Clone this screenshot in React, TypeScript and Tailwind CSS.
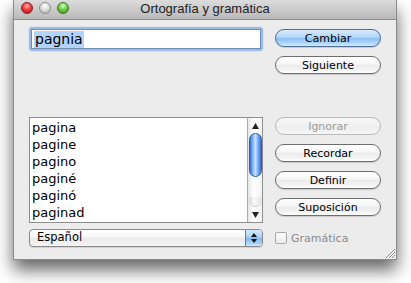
import React from "react";

function Btn({ label, kind }: { label: string; kind: "blue" | "normal" | "disabled" }) {
  const base =
    "h-[18px] rounded-full border flex items-center justify-center text-[11px] leading-none font-['DejaVu_Sans',sans-serif]";
  if (kind === "blue")
    return (
      <div
        className={`${base} border-[#4f6f9c] text-black bg-[linear-gradient(to_bottom,#d8eafc_0%,#b3d6f8_45%,#8ec1f1_52%,#a9d3fa_80%,#d6eeff_100%)] shadow-[0_1px_1px_rgba(0,0,0,0.15)]`}
      >
        {label}
      </div>
    );
  if (kind === "disabled")
    return (
      <div
        className={`${base} border-[#b9b9b9] text-[#9a9a9a] bg-[linear-gradient(to_bottom,#f7f7f7_0%,#f1f1f1_50%,#ececec_51%,#f6f6f6_100%)]`}
      >
        {label}
      </div>
    );
  return (
    <div
      className={`${base} border-[#6e6e6e] text-black bg-[linear-gradient(to_bottom,#ffffff_0%,#f6f6f6_45%,#ebebeb_52%,#f3f3f3_80%,#ffffff_100%)] shadow-[0_1px_1px_rgba(0,0,0,0.15)]`}
    >
      {label}
    </div>
  );
}

export default function App() {
  const words = ["pagina", "pagine", "pagino", "paginé", "paginó", "paginad"];
  return (
    <div className="w-[411px] h-[283px] bg-white overflow-hidden font-['DejaVu_Sans',sans-serif]">
      <div className="ml-[13px] w-[384px] h-[260px] bg-[#ececec] border-x border-b border-[#8a8a8a] shadow-[0_10px_16px_rgba(0,0,0,0.6)] flex flex-col relative">
        {/* title bar */}
        <div className="h-[20px] shrink-0 relative flex items-center justify-center bg-[linear-gradient(to_bottom,#dcdcdc,#b9b9b9)] border-b border-[#8c8c8c]">
          <div className="absolute left-[7px] top-[2px] flex gap-[6px]">
            <div className="w-[12px] h-[12px] rounded-full border border-[#8c2020] bg-[radial-gradient(circle_at_50%_30%,#ffb3b3_0%,#ee3b3b_45%,#b01010_100%)]" />
            <div className="w-[12px] h-[12px] rounded-full border border-[#8e8e8e] bg-[radial-gradient(circle_at_50%_30%,#ffffff_0%,#dddddd_45%,#a9a9a9_100%)]" />
            <div className="w-[12px] h-[12px] rounded-full border border-[#3d7a22] bg-[radial-gradient(circle_at_50%_30%,#d8ffc0_0%,#6fcb4a_45%,#2f8a10_100%)]" />
          </div>
          <span className="text-[13px] text-[#222] font-['Liberation_Sans',sans-serif] leading-none mt-[-2px]">
            Ortografía y gramática
          </span>
        </div>

        {/* content */}
        <div className="flex px-[15px] gap-[12px]">
          {/* left column */}
          <div className="w-[234px] flex flex-col pt-[7px]">
            <div className="h-[24px] rounded-[4px] bg-[#9dbde6] p-[2px] shadow-[0_0_1px_#6d95c9]">
              <div className="h-full bg-white border border-[#6f8db5] flex items-center pl-[2px]">
                <span className="bg-[#b3d3fb] text-[14px] leading-[17px] text-black px-[1px]">pagnia</span>
              </div>
            </div>

            <div className="mt-[66px] h-[106px] border border-[#8e8e8e] bg-white flex">
              <div className="flex-1 pl-[2px] pt-[1px]">
                {words.map((w) => (
                  <div key={w} className="h-[17px] leading-[17px] text-[13px] text-black">
                    {w}
                  </div>
                ))}
              </div>
              <div className="w-[15px] border-l border-[#a9a9a9] bg-[linear-gradient(to_right,#e6e6e6,#ffffff_40%,#f2f2f2)] flex flex-col items-center">
                <svg width="7" height="6" className="mt-[5px]" viewBox="0 0 7 6">
                  <path d="M3.5 0 L7 6 L0 6 Z" fill="#222" />
                </svg>
                <div className="mt-[4px] w-[13px] h-[44px] rounded-full border border-[#2f57a8] bg-[linear-gradient(to_right,#3a6fd0,#8fc0ff_30%,#c6e2ff_50%,#7fb3fb_70%,#3b6cd2)]" />
                <div className="flex-1" />
                <div className="w-[13px] h-[10px] rounded-b-full bg-[linear-gradient(to_right,#d8d8d8,#fafafa_40%,#e2e2e2)] border-b border-[#c8c8c8]" />
                <svg width="7" height="6" className="mt-[5px] mb-[4px]" viewBox="0 0 7 6">
                  <path d="M0 0 L7 0 L3.5 6 Z" fill="#222" />
                </svg>
              </div>
            </div>

            <div className="mt-[6px] h-[18px] rounded-[4px] border border-[#8a8a8a] flex overflow-hidden bg-[linear-gradient(to_bottom,#ffffff_0%,#f7f7f7_45%,#eaeaea_52%,#f4f4f4_100%)] shadow-[0_1px_1px_rgba(0,0,0,0.12)]">
              <div className="flex-1 flex items-center pl-[7px] text-[11.5px] leading-none text-black">Español</div>
              <div className="w-[17px] border-l border-[#5a7fb5] flex flex-col items-center justify-center gap-[2px] bg-[linear-gradient(to_bottom,#d6e9fc_0%,#a8d0f7_45%,#82b9ef_52%,#a9d3fa_85%,#d4ecff_100%)]">
                <svg width="6" height="4" viewBox="0 0 6 4">
                  <path d="M3 0 L6 4 L0 4 Z" fill="#111" />
                </svg>
                <svg width="6" height="4" viewBox="0 0 6 4">
                  <path d="M0 0 L6 0 L3 4 Z" fill="#111" />
                </svg>
              </div>
            </div>
          </div>

          {/* right column */}
          <div className="w-[106px] flex flex-col pt-[9px]">
            <Btn label="Cambiar" kind="blue" />
            <div className="mt-[9px]">
              <Btn label="Siguiente" kind="normal" />
            </div>
            <div className="mt-[43px] flex flex-col gap-[9px]">
              <Btn label="Ignorar" kind="disabled" />
              <Btn label="Recordar" kind="normal" />
              <Btn label="Definir" kind="normal" />
              <Btn label="Suposición" kind="normal" />
            </div>
            <div className="mt-[16px] flex items-center gap-[4px]">
              <div className="w-[12px] h-[12px] rounded-[2px] border border-[#a9a9a9] bg-[linear-gradient(to_bottom,#fdfdfd,#ececec)]" />
              <span className="text-[11px] leading-none text-[#8a8a8a]">Gramática</span>
            </div>
          </div>
        </div>

        {/* resize grip */}
        <svg className="absolute right-[1px] bottom-[1px]" width="11" height="11" viewBox="0 0 11 11">
          <path d="M2 11 L11 2 M5 11 L11 5 M8 11 L11 8" stroke="#8a8a8a" strokeWidth="1" />
          <path d="M3 11 L11 3 M6 11 L11 6 M9 11 L11 9" stroke="#ffffff" strokeWidth="1" />
        </svg>
      </div>
    </div>
  );
}
